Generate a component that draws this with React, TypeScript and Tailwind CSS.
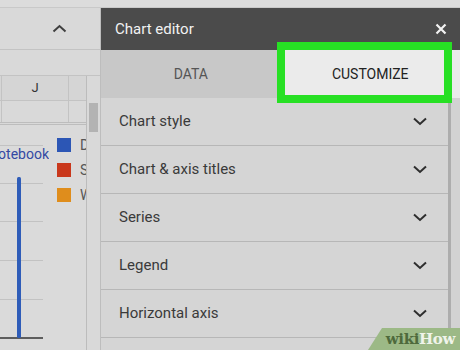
import React from 'react'

const rows = ['Chart style', 'Chart & axis titles', 'Series', 'Legend', 'Horizontal axis', 'Vertical axis']

const legend = [
  { color: 'bg-[#2c56b5]', label: 'Desktop' },
  { color: 'bg-[#c9381c]', label: 'Smartphone' },
  { color: 'bg-[#df8d1c]', label: 'Watch' },
]

function ChevronDown() {
  return (
    <svg width="14" height="9" viewBox="0 0 14 9" fill="none">
      <path d="M1 1.5 L7 7 L13 1.5" stroke="#2e2e2e" strokeWidth="2" />
    </svg>
  )
}

function SheetSide() {
  return (
    <div className="flex w-[101px] shrink-0 flex-col border-r border-[#bdbdbd] bg-[#d9d9d9]">
      <div className="flex h-[42px] shrink-0 items-center border-b border-[#c3c3c3] pl-[52px]">
        <svg width="15" height="9" viewBox="0 0 15 9" fill="none">
          <path d="M1.5 7.5 L7.5 2 L13.5 7.5" stroke="#3f3f3f" strokeWidth="2" />
        </svg>
      </div>
      <div className="h-[26px] shrink-0 border-b border-[#c3c3c3]" />
      <div className="flex min-h-0 flex-1">
        <div className="flex w-[87px] shrink-0 flex-col border-r border-[#bcbcbc]">
          <div className="flex h-[25px] shrink-0 border-b border-[#c3c3c3] bg-[#d5d5d5]">
            <div className="ml-px flex w-[68px] items-center justify-center border-x border-[#c3c3c3] text-[13px] text-[#333]">J</div>
          </div>
          <div className="flex h-[24px] shrink-0 border-b-[3px] border-double border-[#bdbdbd]">
            <div className="ml-px w-[68px] border-x border-[#c3c3c3]" />
          </div>
          <div className="relative flex min-h-0 flex-1 overflow-hidden bg-[#dadada]">
            <svg className="absolute left-0 top-0" width="48" height="220" viewBox="0 0 48 220">
              <g stroke="#c2c2c2" strokeWidth="1">
                <line x1="0" y1="20.5" x2="43" y2="20.5" />
                <line x1="0" y1="58.5" x2="43" y2="58.5" />
                <line x1="0" y1="96.5" x2="43" y2="96.5" />
                <line x1="0" y1="135.5" x2="43" y2="135.5" />
                <line x1="0" y1="174.5" x2="43" y2="174.5" />
              </g>
              <line x1="0" y1="213" x2="43" y2="213" stroke="#333" strokeWidth="1.5" />
              <rect x="17" y="52" width="4" height="161" rx="1.5" fill="#2e5cb8" />
            </svg>
            <div className="relative flex w-[49px] shrink-0 justify-end overflow-hidden pt-[19px]">
              <span className="whitespace-nowrap text-[14px] leading-[20px] text-[#3349a3]">Notebook</span>
            </div>
            <div className="relative flex min-w-0 flex-1 flex-col gap-[11px] overflow-hidden pl-[8px] pt-[13px]">
              {legend.map((l) => (
                <div key={l.label} className="flex h-[14px] items-center gap-[9px]">
                  <div className={`h-[14px] w-[14px] shrink-0 ${l.color}`} />
                  <span className="whitespace-nowrap text-[14px] text-[#555]">{l.label}</span>
                </div>
              ))}
            </div>
          </div>
        </div>
        <div className="flex flex-1 flex-col px-[2px]">
          <div className="mt-[27px] h-[29px] w-full shrink-0 bg-[#b3b3b3]" />
        </div>
      </div>
    </div>
  )
}

function ChartEditor() {
  return (
    <div className="relative flex min-w-0 flex-1 flex-col bg-[#d5d5d5]">
      <div className="flex h-[42px] shrink-0 items-center justify-between bg-[#4b4b4b] pl-[14px] pr-[13px]">
        <span className="text-[15px] text-[#f2f2f2]">Chart editor</span>
        <svg width="12" height="12" viewBox="0 0 12 12">
          <path d="M1.5 1.5 L10.5 10.5 M10.5 1.5 L1.5 10.5" stroke="#f2f2f2" strokeWidth="2.2" />
        </svg>
      </div>
      <div className="flex h-[48px] shrink-0">
        <div className="flex flex-1 items-center justify-center bg-[#c8c8c8] text-[14px] text-[#555]">DATA</div>
        <div className="flex flex-1 items-center justify-center bg-[#ebebeb] text-[14px] text-[#222]">CUSTOMIZE</div>
      </div>
      <div className="flex min-h-0 flex-1">
        <div className="flex min-w-0 flex-1 flex-col">
          {rows.map((r) => (
            <div
              key={r}
              className="flex h-[48px] shrink-0 items-center justify-between border-b border-[#b7b7b7] pl-[18px] pr-[21px]"
            >
              <span className="text-[15px] text-[#3a3a3a]">{r}</span>
              <ChevronDown />
            </div>
          ))}
        </div>
        <div className="w-[12px] shrink-0 border-l-[3px] border-[#adadad] bg-[#d2d2d2]" />
      </div>
      <div className="absolute left-[176px] top-[34px] h-[61px] w-[175px] border-[8px] border-[#27e024]" />
    </div>
  )
}

export default function App() {
  return (
    <div
      className="relative flex h-[350px] w-[460px] flex-col overflow-hidden bg-[#d9d9d9]"
      style={{ fontFamily: 'Roboto, "Liberation Sans", sans-serif' }}
    >
      <div className="h-[8px] shrink-0 border-b border-[#c9c9c9] bg-[#dcdcdc]" />
      <div className="flex min-h-0 flex-1">
        <SheetSide />
        <ChartEditor />
      </div>
      <div className="absolute bottom-0 right-0 flex h-[22px] w-[92px] items-center justify-end bg-[#9cb986] pr-[5px] [clip-path:polygon(14px_0,100%_0,100%_100%,0_100%)]">
        <span className="font-['DejaVu_Serif',serif] text-[15px] font-bold leading-none tracking-tight">
          <span className="text-[#4e6a3c]">wiki</span>
          <span className="text-[#f0f4ea]">How</span>
        </span>
      </div>
    </div>
  )
}
